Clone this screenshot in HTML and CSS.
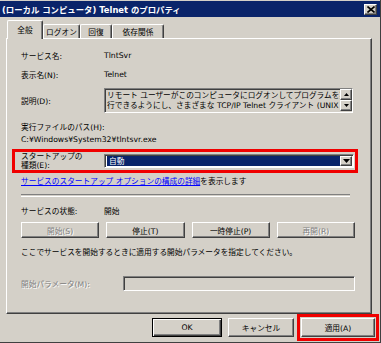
FILE: index.html
```html
<!DOCTYPE html>
<html lang="ja">

<head>
    <meta charset="UTF-8">
    <title>Telnet のプロパティ</title>
    <link rel="stylesheet" href="styles.css">
</head>

<body>
    <div class="window">
        <div class="titlebar">
            <span class="title">(ローカル コンピュータ) Telnet のプロパティ</span>
            <span class="close-btn">
                <svg width="8" height="7" viewBox="0 0 8 7">
                    <path d="M0.5 0.5 L7.5 6.5 M7.5 0.5 L0.5 6.5" stroke="#000" stroke-width="1.6" />
                </svg>
            </span>
        </div>
        <div class="client">
            <div class="tabs">
                <div class="tab active tab-general">全般</div>
                <div class="tab tab-logon">ログオン</div>
                <div class="tab tab-recovery">回復</div>
                <div class="tab tab-deps">依存関係</div>
            </div>
            <div class="panel">
                <div class="row row-name">
                    <span class="label">サービス名:</span>
                    <span>TlntSvr</span>
                </div>
                <div class="row row-display">
                    <span class="label">表示名(N):</span>
                    <span>Telnet</span>
                </div>
                <div class="row row-desc">
                    <span class="label">説明(D):</span>
                    <div class="desc">
                        <div class="desc-text">
                            <div>リモート ユーザーがこのコンピュータにログオンしてプログラムを実</div>
                            <div>行できるようにし、さまざまな TCP/IP Telnet クライアント (UNIX</div>
                        </div>
                        <div class="vscroll">
                            <span class="sb-btn">
                                <svg width="5" height="3" viewBox="0 0 5 3"><path d="M2.5 0 L5 3 L0 3 Z" fill="#000" /></svg>
                            </span>
                            <span class="sb-btn">
                                <svg width="5" height="3" viewBox="0 0 5 3"><path d="M0 0 L5 0 L2.5 3 Z" fill="#000" /></svg>
                            </span>
                        </div>
                    </div>
                </div>
                <div class="line exe-label">実行ファイルのパス(H):</div>
                <div class="line">C:¥Windows¥System32¥tlntsvr.exe</div>
                <div class="startup">
                    <div class="startup-label">スタートアップの<br>種類(E):</div>
                    <div class="combo">
                        <span class="combo-value">自動</span>
                        <span class="combo-btn">
                            <svg width="7" height="4" viewBox="0 0 7 4"><path d="M0 0 L7 0 L3.5 4 Z" fill="#000" /></svg>
                        </span>
                    </div>
                </div>
                <div class="line link-line"><a class="link" href="#">サービスのスタートアップ オプションの構成の詳細</a>を表示します</div>
                <div class="sep"></div>
                <div class="row row-status">
                    <span class="label">サービスの状態:</span>
                    <span>開始</span>
                </div>
                <div class="svc-buttons">
                    <button class="btn disabled">開始(S)</button>
                    <button class="btn">停止(T)</button>
                    <button class="btn">一時停止(P)</button>
                    <button class="btn disabled">再開(R)</button>
                </div>
                <div class="line hint">ここでサービスを開始するときに適用する開始パラメータを指定してください。</div>
                <div class="row row-param">
                    <span class="label disabled-text">開始パラメータ(M):</span>
                    <div class="field"></div>
                </div>
            </div>
            <div class="footer">
                <button class="btn btn-default btn-ok">OK</button>
                <button class="btn btn-cancel">キャンセル</button>
                <div class="highlight-apply">
                    <button class="btn btn-apply">適用(A)</button>
                </div>
            </div>
        </div>
    </div>
</body>

</html>
```

FILE: styles.css
```css
body {
    margin: 0;
    font-family: "DejaVu Sans", "Noto Sans CJK JP", sans-serif;
    font-size: 7.7px;
    color: #000;
}

.window {
    width: 381px;
    height: 343px;
    box-sizing: border-box;
    background-color: #d4d0c8;
    border-right: 1px solid #404040;
    border-bottom: 1px solid #404040;
    padding-top: 1px;
}

.titlebar {
    height: 16px;
    background-color: #0a246a;
    display: flex;
    align-items: center;
    justify-content: space-between;
    padding: 0 3px 0 2px;
}

.title {
    color: #fff;
    font-weight: bold;
    font-size: 8.4px;
    white-space: nowrap;
}

.close-btn {
    width: 13px;
    height: 11px;
    box-sizing: border-box;
    background-color: #d4d0c8;
    border: 1px solid;
    border-color: #fff #404040 #404040 #fff;
    box-shadow: inset -1px -1px #808080;
    display: flex;
    align-items: center;
    justify-content: center;
}

.client {
    padding: 0 8px 0 6px;
}

.tabs {
    display: flex;
    align-items: flex-end;
    height: 18px;
    margin-top: 3px;
    padding-left: 1px;
    position: relative;
    z-index: 1;
}

.tab {
    height: 14px;
    box-sizing: border-box;
    border-top: 1px solid #fff;
    border-left: 1px solid #fff;
    border-right: 1px solid #404040;
    box-shadow: inset -1px 0 #808080;
    border-radius: 2px 2px 0 0;
    display: flex;
    align-items: center;
    justify-content: center;
    white-space: nowrap;
}

.tab.active {
    height: 19px;
    margin-bottom: -1px;
    background-color: #d4d0c8;
    padding-bottom: 2px;
}

.tab-general { width: 36px; }
.tab-logon { width: 37px; }
.tab-recovery { width: 32px; }
.tab-deps { width: 52px; }

.panel {
    height: 276px;
    box-sizing: border-box;
    border: 1px solid;
    border-color: #fff #404040 #404040 #fff;
    box-shadow: inset -1px -1px #808080;
    padding: 10px 14px 0 14px;
}

.row {
    display: flex;
    align-items: center;
    height: 12px;
    white-space: nowrap;
}

.label {
    width: 83px;
    flex-shrink: 0;
}

.row-display { margin-top: 7px; }

.row-desc {
    margin-top: 8px;
    height: 25px;
}

.desc {
    width: 249px;
    height: 25px;
    box-sizing: border-box;
    border: 1px solid;
    border-color: #808080 #fff #fff #808080;
    box-shadow: inset 1px 1px #404040;
    display: flex;
    overflow: hidden;
}

.desc-text {
    flex: 1;
    overflow: hidden;
    padding: 2px 0 0 2px;
    line-height: 10px;
}

.vscroll {
    width: 12px;
    display: flex;
    flex-direction: column;
}

.sb-btn {
    height: 11px;
    box-sizing: border-box;
    border: 1px solid;
    border-color: #fff #404040 #404040 #fff;
    box-shadow: inset -1px -1px #808080;
    display: flex;
    align-items: center;
    justify-content: center;
}

.line {
    height: 12px;
    line-height: 12px;
    white-space: nowrap;
}

.exe-label { margin-top: 9px; }

.startup {
    margin: 3px 0 0 -9px;
    width: 346px;
    height: 24px;
    box-sizing: border-box;
    border: 3px solid #f00000;
    padding-left: 6px;
    display: flex;
    align-items: center;
}

.startup-label {
    width: 83px;
    flex-shrink: 0;
    line-height: 9.5px;
    white-space: nowrap;
}

.combo {
    width: 250px;
    height: 14px;
    box-sizing: border-box;
    border: 1px solid;
    border-color: #808080 #fff #fff #808080;
    box-shadow: inset 1px 1px #404040;
    background-color: #fff;
    padding: 1px;
    display: flex;
}

.combo-value {
    flex: 1;
    background-color: #0a246a;
    color: #fff;
    padding-left: 2px;
    line-height: 11px;
    margin-left: 1px;
}

.combo-btn {
    width: 12px;
    box-sizing: border-box;
    background-color: #d4d0c8;
    border: 1px solid;
    border-color: #fff #404040 #404040 #fff;
    box-shadow: inset -1px -1px #808080;
    display: flex;
    align-items: center;
    justify-content: center;
}

.link-line { margin-top: 3px; }

.link {
    color: #0000ff;
    text-decoration: underline;
}

.sep {
    width: 329px;
    height: 1px;
    margin-top: 6px;
    border-top: 1px solid #808080;
    border-bottom: 1px solid #fff;
}

.row-status { margin-top: 7px; }

.svc-buttons {
    display: grid;
    grid-template-columns: repeat(4, 1fr);
    column-gap: 7px;
    width: 334px;
    height: 16px;
    margin-top: 6px;
}

.btn {
    font-family: inherit;
    font-size: inherit;
    color: #000;
    background-color: #d4d0c8;
    border: 1px solid;
    border-color: #fff #404040 #404040 #fff;
    box-shadow: inset -1px -1px #808080;
    padding: 0;
    margin: 0;
    white-space: nowrap;
}

.btn.disabled {
    color: #808080;
    text-shadow: 1px 1px #fff;
}

.hint { margin-top: 9px; }

.row-param {
    margin-top: 17px;
    height: 15px;
}

.row-param .label { width: 102px; }

.disabled-text {
    color: #808080;
    text-shadow: 1px 1px #fff;
}

.field {
    width: 232px;
    height: 15px;
    box-sizing: border-box;
    border: 1px solid;
    border-color: #808080 #fff #fff #808080;
    box-shadow: inset 1px 1px #404040;
}

.footer {
    display: flex;
    justify-content: flex-end;
    align-items: flex-start;
    margin-right: -7px;
}

.footer .btn {
    height: 19px;
}

.btn-ok {
    width: 70px;
    margin: 4px 6px 0 0;
}

.btn-default {
    border: 1px solid #000;
    box-shadow: inset 1px 1px #fff, inset -1px -1px #404040, inset -2px -2px #808080;
}

.btn-cancel {
    width: 66px;
    margin: 4px 3px 0 0;
}

.highlight-apply {
    height: 27px;
    box-sizing: border-box;
    border: 3px solid #f00000;
    padding: 1px;
}

.btn-apply {
    width: 74px;
}
```
